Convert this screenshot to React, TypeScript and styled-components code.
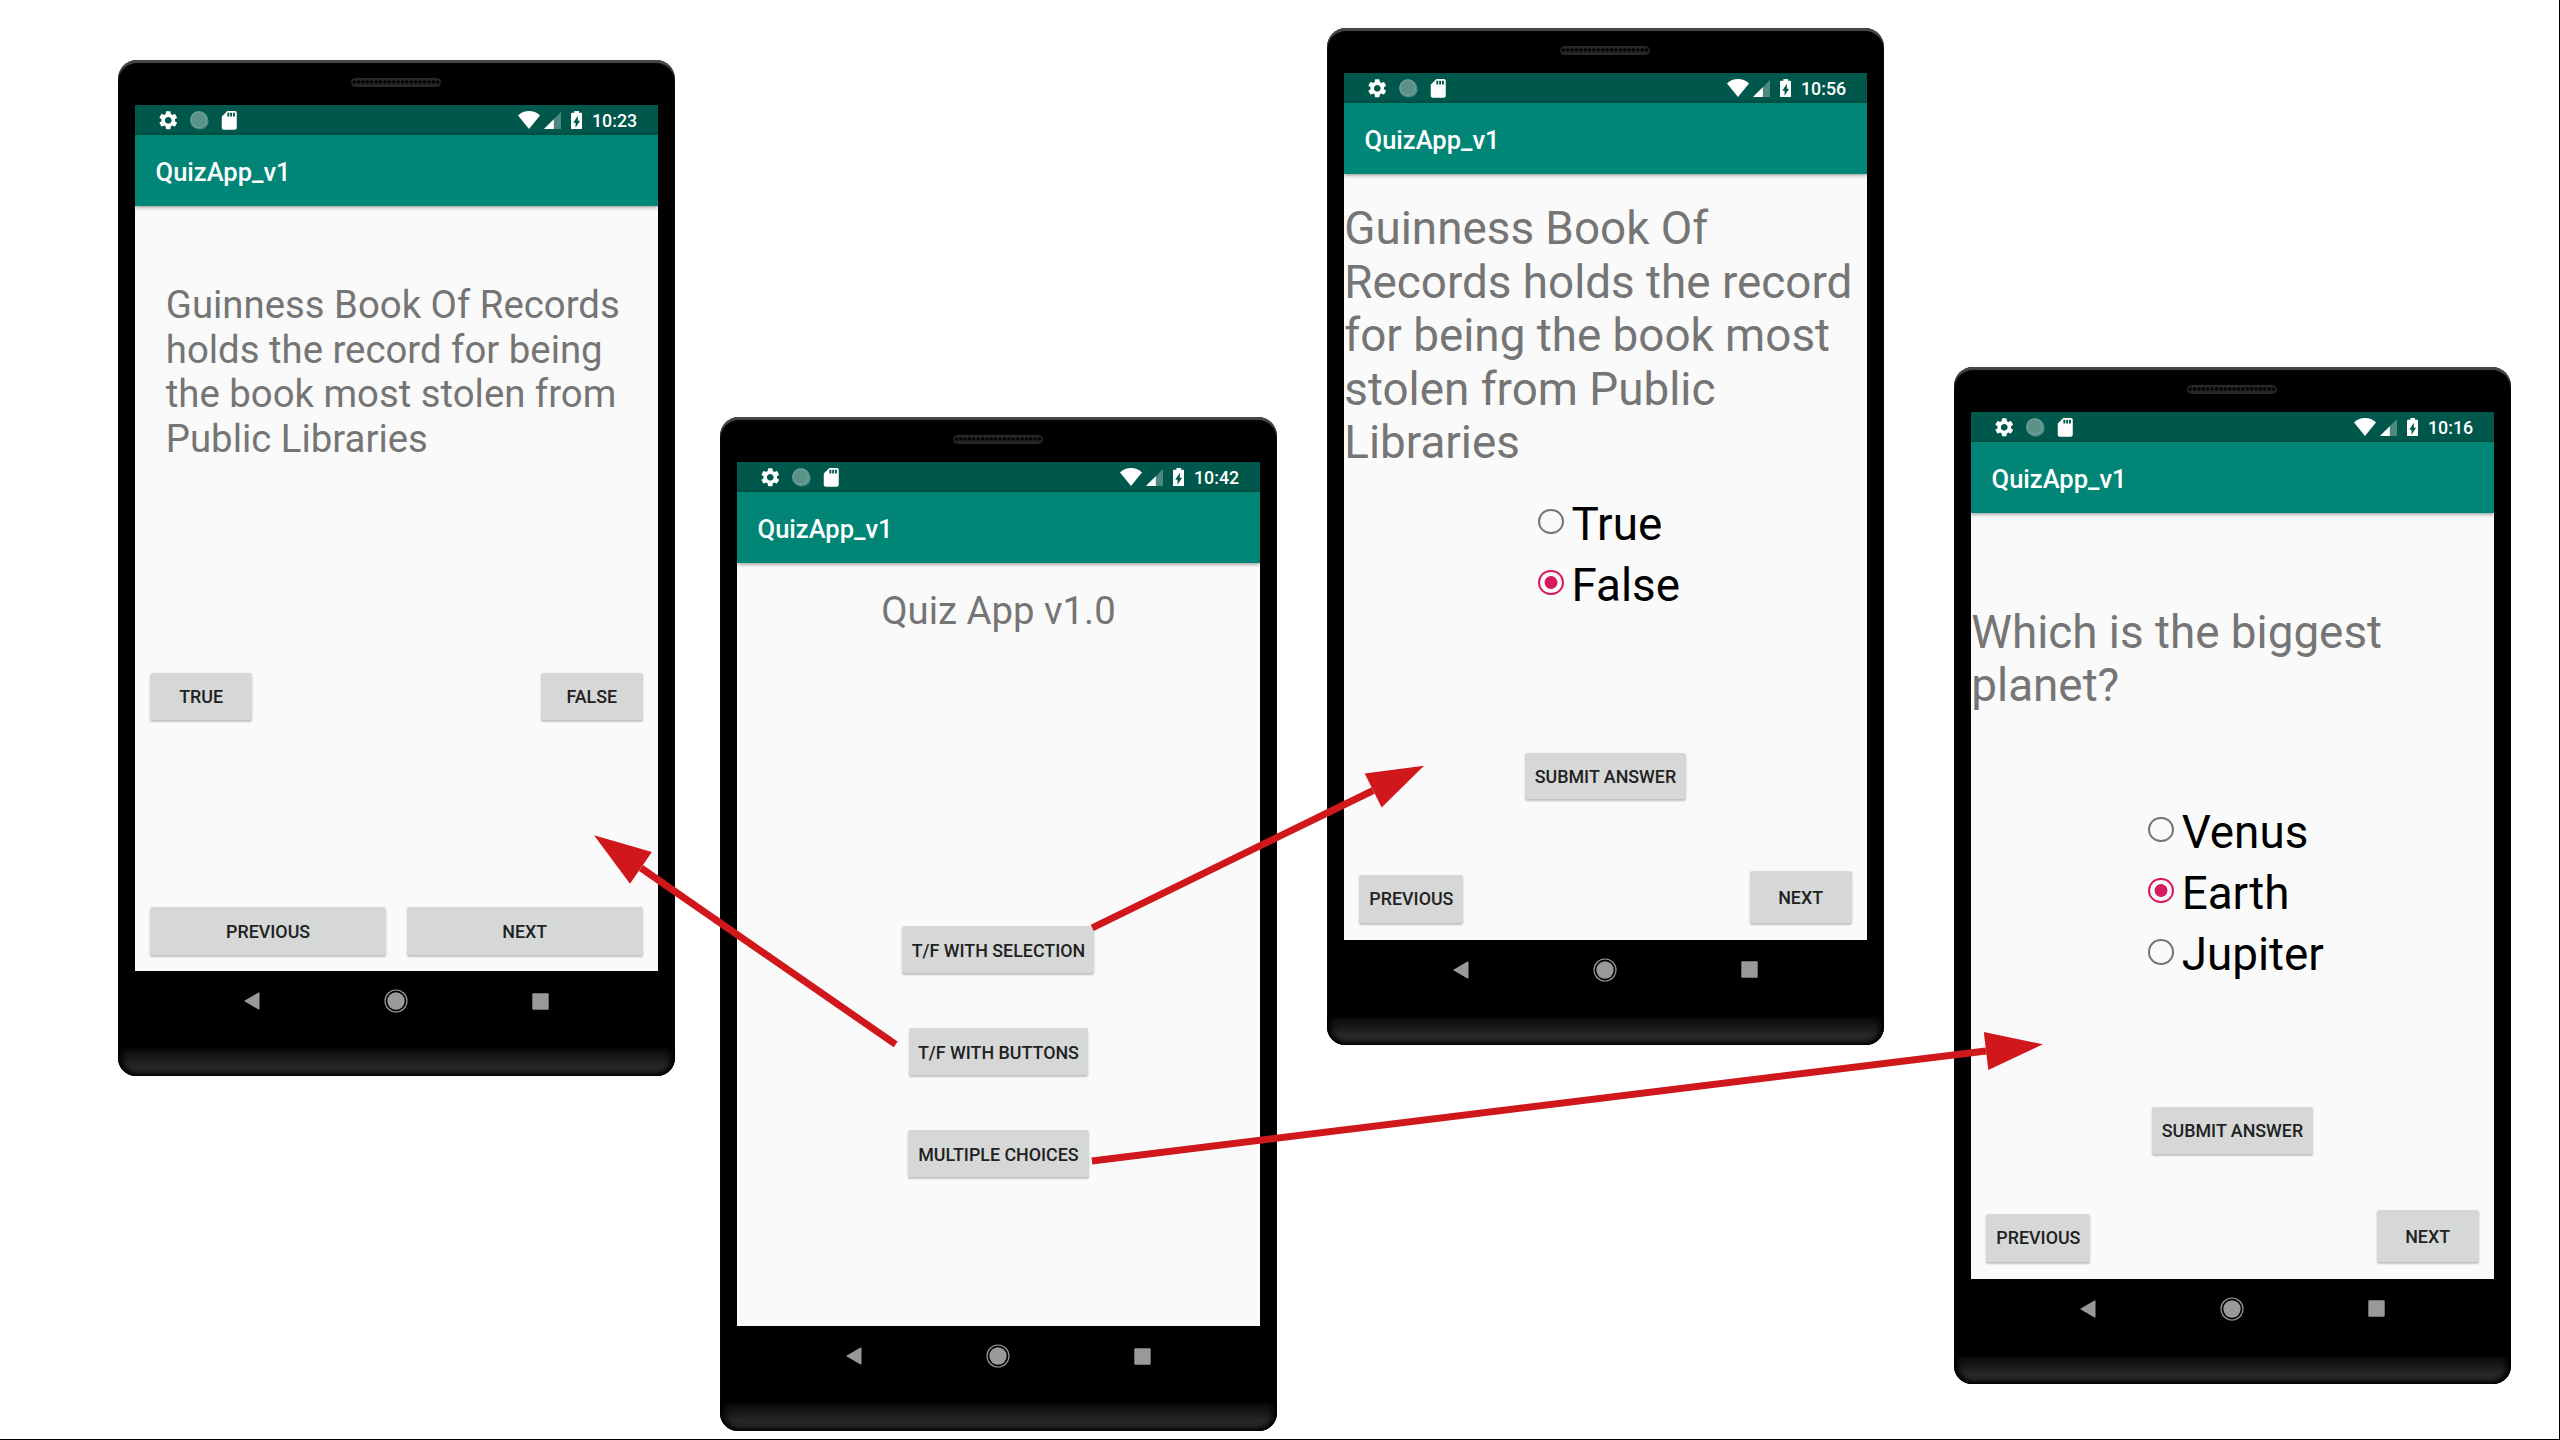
import React from 'react';
import styled, { createGlobalStyle } from 'styled-components';
import { MdSettings, MdSdCard } from 'react-icons/md';

const GlobalStyle = createGlobalStyle`
  html, body { margin: 0; padding: 0; background: #fff; }
  * { box-sizing: border-box; }
  body { font-family: Roboto, "Liberation Sans", sans-serif; overflow: hidden; }
`;

const Canvas = styled.main`
  position: relative;
  width: 2560px;
  height: 1440px;
  overflow: hidden;
  background: #fff;
  border-right: 1px solid #000;
  border-bottom: 1px solid #000;
`;

const Device = styled.section<{ $x: number; $y: number; $h: number }>`
  position: absolute;
  left: ${(p) => p.$x}px;
  top: ${(p) => p.$y}px;
  width: 557px;
  height: ${(p) => p.$h}px;
  display: flex;
  flex-direction: column;
  background: #000;
  border-radius: 19px 19px 18px 18px;
  overflow: hidden;
  box-shadow: inset 0 3px 1px #484848;
`;

const Forehead = styled.div`
  height: 45px;
  flex: none;
  padding: 18px 1px 0 0;
  display: flex;
  justify-content: center;
`;

const Speaker = styled.div`
  width: 90px;
  height: 9px;
  padding: 0 3px;
  border-radius: 5px;
  border: 1.5px solid #2b2b2b;
  background: radial-gradient(circle at 2.2px 3px, #000 1.3px, #242424 2px) 0 0 / 4.4px 6px;
`;

const Screen = styled.div`
  flex: 1;
  min-height: 0;
  margin: 0 17.4px 0 17.3px;
  display: flex;
  flex-direction: column;
  background: #fafafa;
`;

const StatusBar = styled.header`
  height: 30.3px;
  flex: none;
  display: flex;
  align-items: center;
  padding: 0 20.5px 0 21.9px;
  background: #00574b;
  color: #fff;
`;

const Notices = styled.div`
  display: flex;
  gap: 8px;
  flex: 1;
  svg { display: block; width: 22.5px; height: 22.5px; }
`;

const Signals = styled.div`
  display: flex;
  align-items: center;
  svg { display: block; }
`;

const Clock = styled.span`
  margin-left: 9.5px;
  padding-top: 2px;
  font-size: 17.8px;
  line-height: 22px;
  font-weight: 500;
`;

const AppBar = styled.div`
  height: 70.7px;
  flex: none;
  display: flex;
  align-items: center;
  padding: 3px 0 0 20.3px;
  background: #008577;
  color: #fff;
  font-size: 25.5px;
  font-weight: 500;
  box-shadow: 0 1px 4px rgba(0, 0, 0, 0.45);
`;

const Body = styled.div`
  flex: 1;
  display: flex;
  flex-direction: column;
  align-items: stretch;
`;

const Heading = styled.h1<{ $top: number }>`
  margin: ${(p) => p.$top}px 0 0;
  text-align: center;
  font-size: 38.3px;
  line-height: 44.6px;
  font-weight: 400;
  color: #757575;
`;

const Question = styled.p<{ $top: number; $left?: number; $large?: boolean }>`
  margin: ${(p) => p.$top}px 0 0 ${(p) => p.$left ?? 0}px;
  font-size: ${(p) => (p.$large ? 45.8 : 38.35)}px;
  line-height: ${(p) => (p.$large ? 53.6 : 44.5)}px;
  color: #757575;
  white-space: nowrap;
`;

const ButtonRow = styled.div<{ $top: number; $gap?: number; $spread?: boolean }>`
  display: flex;
  align-items: flex-end;
  margin-top: ${(p) => p.$top}px;
  padding: 0 15px;
  gap: ${(p) => p.$gap ?? 0}px;
  justify-content: ${(p) => (p.$spread ? 'space-between' : 'center')};
`;

const Button = styled.button<{ $w?: number; $h?: number; $grow?: boolean }>`
  width: ${(p) => (p.$w ? `${p.$w}px` : 'auto')};
  flex: ${(p) => (p.$grow ? '1 1 0' : 'none')};
  height: ${(p) => p.$h ?? 47}px;
  padding: 0.5px 0 0;
  border: 0;
  border-radius: 2.5px;
  background: #d6d8d7;
  color: #212121;
  font-family: inherit;
  font-size: 17.85px;
  font-weight: 500;
  white-space: nowrap;
  box-shadow: 0 2px 2px -0.5px rgba(0, 0, 0, 0.22), 0 0 1.5px rgba(0, 0, 0, 0.08);
`;

const RadioGroup = styled.div<{ $top: number }>`
  margin-top: ${(p) => p.$top}px;
  align-self: center;
  display: flex;
  flex-direction: column;
`;

const RadioRow = styled.label`
  height: 61.2px;
  display: flex;
  align-items: center;
  font-size: 45.8px;
  line-height: 53.6px;
  color: #000;
`;

const RadioMark = styled.span<{ $on?: boolean }>`
  width: 25.6px;
  height: 25.6px;
  margin: 0 7.7px 6.4px 7.3px;
  border-radius: 50%;
  border: 2.3px solid ${(p) => (p.$on ? '#d81b60' : '#757575')};
  background: ${(p) => (p.$on ? 'radial-gradient(circle, #d81b60 6px, transparent 6.8px)' : 'none')};
`;

const NavBar = styled.nav`
  flex: none;
  height: 61px;
  padding: 0 1px 1px 0;
  display: flex;
  justify-content: center;
  align-items: center;
`;

const NavCell = styled.span`
  width: 144.5px;
  display: flex;
  justify-content: center;
`;

const Chin = styled.div`
  flex: none;
  height: 28px;
  margin-top: 16px;
  border-radius: 0 0 18px 18px;
  background: linear-gradient(#0d0d0d, #181818 35%, #262626 60%, #282828);
  box-shadow: inset 0 -2px 4px #000, inset 6px 0 7px -2px #000, inset -6px 0 7px -2px #000;
`;

const Arrows = styled.svg`
  position: absolute;
  left: 0;
  top: 0;
  width: 2560px;
  height: 1440px;
  pointer-events: none;
`;

const SyncIcon = () => (
  <svg viewBox="0 0 24 24">
    <circle cx="12" cy="12.2" r="9.7" fill="#fff" opacity=".3" />
    <circle cx="11.4" cy="11.4" r="9" fill="#5b9288" />
    <circle cx="11.4" cy="11.4" r="8.2" fill="none" stroke="#88b3ab" strokeWidth="1.3" strokeDasharray="1 1.15" />
    <path d="M20.6 8A9.9 9.9 0 0 1 7.600 21.200 9.900 9.900 0 0 0 21.600 14 9.900 9.900 0 0 0 20.600 8z" fill="#fff" />
  </svg>
);

const WifiIcon = () => (
  <svg width="22" height="18" viewBox="0 0 22 18">
    <path d="M11 18L0 4.4C3 1.5 7 0 11 0s8 1.5 11 4.4z" fill="#fff" />
  </svg>
);

const CellGlyph = styled.svg`
  margin: 1px 0 0 3.4px;
`;

const CellIcon = () => (
  <CellGlyph width="17" height="17" viewBox="0 0 17 17">
    <path d="M17 0v17H0z" fill="#fff" opacity=".3" />
    <path d="M9.8 7.2V17H0z" fill="#fff" />
  </CellGlyph>
);

const BatteryGlyph = styled.svg`
  margin-left: 10.5px;
`;

const BatteryIcon = () => (
  <BatteryGlyph width="11.4" height="18.7" viewBox="7 2 10 20" preserveAspectRatio="none">
    <path
      fill="#fff"
      d="M15.67 4H14V2h-4v2H8.33C7.6 4 7 4.6 7 5.33v15.33C7 21.4 7.6 22 8.33 22h7.33c.74 0 1.34-.6 1.34-1.33V5.33C17 4.6 16.4 4 15.67 4zM11 20v-5.5H9L13 7v5.5h2L11 20z"
    />
  </BatteryGlyph>
);

type PhoneProps = { x: number; y: number; h?: number; time: string; children: React.ReactNode };

const Phone = ({ x, y, h = 1016, time, children }: PhoneProps) => (
  <Device $x={x} $y={y} $h={h}>
    <Forehead>
      <Speaker />
    </Forehead>
    <Screen>
      <StatusBar>
        <Notices>
          <MdSettings />
          <SyncIcon />
          <MdSdCard />
        </Notices>
        <Signals>
          <WifiIcon />
          <CellIcon />
          <BatteryIcon />
          <Clock>{time}</Clock>
        </Signals>
      </StatusBar>
      <AppBar>QuizApp_v1</AppBar>
      <Body>{children}</Body>
    </Screen>
    <NavBar>
      <NavCell>
        <svg width="16" height="18" viewBox="0 0 16 18">
          <path d="M15.5 1.2v15.6a.7.7 0 0 1-1 .6L.8 9.6a.7.7 0 0 1 0-1.2L14.5.6a.7.7 0 0 1 1 .6z" fill="#999" />
        </svg>
      </NavCell>
      <NavCell>
        <svg width="24" height="24" viewBox="0 0 24 24">
          <circle cx="12" cy="12" r="11" fill="none" stroke="#999" strokeWidth="1.2" />
          <circle cx="12" cy="12" r="8.7" fill="#999" />
        </svg>
      </NavCell>
      <NavCell>
        <svg width="17" height="17" viewBox="0 0 17 17">
          <rect x=".3" y=".3" width="16.4" height="16.4" rx="1" fill="#999" />
        </svg>
      </NavCell>
    </NavBar>
    <Chin />
  </Device>
);

type Option = { label: string; on?: boolean };

const Choices = ({ top, options }: { top: number; options: Option[] }) => (
  <RadioGroup $top={top}>
    {options.map((o) => (
      <RadioRow key={o.label}>
        <RadioMark $on={o.on} />
        {o.label}
      </RadioRow>
    ))}
  </RadioGroup>
);

export default function App() {
  return (
    <>
      <GlobalStyle />
      <Canvas>
        <Phone x={118} y={60} time="10:23">
          <Question $top={77.4} $left={30.5}>
            Guinness Book Of Records
            <br />
            holds the record for being
            <br />
            the book most stolen from
            <br />
            Public Libraries
          </Question>
          <ButtonRow $top={211.4} $spread>
            <Button $w={101.8} $h={47.5}>TRUE</Button>
            <Button $w={101.8} $h={47.5}>FALSE</Button>
          </ButtonRow>
          <ButtonRow $top={186.9} $gap={21}>
            <Button $grow $h={47.5}>PREVIOUS</Button>
            <Button $grow $h={47.5}>NEXT</Button>
          </ButtonRow>
        </Phone>

        <Phone x={720} y={417} h={1014.4} time="10:42">
          <Heading $top={26}>Quiz App v1.0</Heading>
          <ButtonRow $top={292.9}>
            <Button $w={192}>T/F WITH SELECTION</Button>
          </ButtonRow>
          <ButtonRow $top={55}>
            <Button $w={179.6}>T/F WITH BUTTONS</Button>
          </ButtonRow>
          <ButtonRow $top={54.8}>
            <Button $w={180.2}>MULTIPLE CHOICES</Button>
          </ButtonRow>
        </Phone>

        <Phone x={1327} y={28} h={1016.5} time="10:56">
          <Question $top={28} $large>
            Guinness Book Of
            <br />
            Records holds the record
            <br />
            for being the book most
            <br />
            stolen from Public
            <br />
            Libraries
          </Question>
          <Choices top={24.1} options={[{ label: 'True' }, { label: 'False', on: true }]} />
          <ButtonRow $top={136.5}>
            <Button $w={161} $h={46}>SUBMIT ANSWER</Button>
          </ButtonRow>
          <ButtonRow $top={72.4} $spread>
            <Button $w={104.2} $h={47.6}>PREVIOUS</Button>
            <Button $w={102} $h={51.2}>NEXT</Button>
          </ButtonRow>
        </Phone>

        <Phone x={1954} y={367} h={1016.5} time="10:16">
          <Question $top={92.6} $large>
            Which is the biggest
            <br />
            planet?
          </Question>
          <Choices top={89.3} options={[{ label: 'Venus' }, { label: 'Earth', on: true }, { label: 'Jupiter' }]} />
          <ButtonRow $top={121.5}>
            <Button $w={161} $h={46.5}>SUBMIT ANSWER</Button>
          </ButtonRow>
          <ButtonRow $top={56.7} $spread>
            <Button $w={104.2} $h={47.6}>PREVIOUS</Button>
            <Button $w={102} $h={51.2}>NEXT</Button>
          </ButtonRow>
        </Phone>

        <Arrows viewBox="0 0 2560 1440" fill="#d0181c" stroke="none">
          <path d="M641 868L895.7 1044.4M1373.2 790.5L1092.3 927.8M1986 1051L1091.9 1161" stroke="#d0181c" strokeWidth="7" />
          <path d="M594 835.3L651.9 852 630 883.7z" />
          <path d="M1424 765.8L1364.7 773.5 1381.6 807.5z" />
          <path d="M2042.9 1044.3L1983.8 1032.1 1988.3 1070z" />
        </Arrows>
      </Canvas>
    </>
  );
}
